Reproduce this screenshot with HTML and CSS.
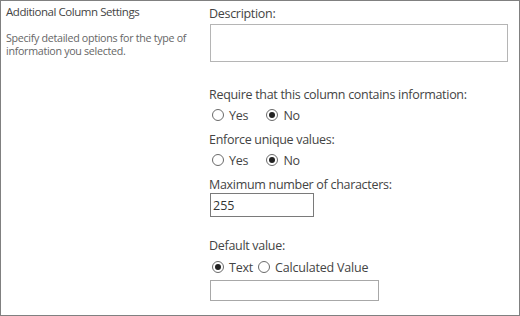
FILE: index.html
```html
<!DOCTYPE html>
<html>
<head>
<meta charset="utf-8">
<link rel="stylesheet" href="styles.css">
</head>
<body>
<div class="panel">
  <div class="side">
    <div class="side-title">Additional Column Settings</div>
    <div class="side-desc">Specify detailed options for the type of information you selected.</div>
  </div>
  <div class="main">
    <div class="label l-desc">Description:</div>
    <div class="textarea"></div>

    <div class="label l-req">Require that this column contains information:</div>
    <div class="radios r1">
      <span class="radio"></span><span class="rtext">Yes</span>
      <span class="radio checked gap"></span><span class="rtext">No</span>
    </div>

    <div class="label l-uni">Enforce unique values:</div>
    <div class="radios r1">
      <span class="radio"></span><span class="rtext">Yes</span>
      <span class="radio checked gap"></span><span class="rtext">No</span>
    </div>

    <div class="label l-max">Maximum number of characters:</div>
    <div class="input small">255</div>

    <div class="label l-def">Default value:</div>
    <div class="radios r3">
      <span class="radio checked"></span><span class="rtext">Text</span>
      <span class="radio gap-s"></span><span class="rtext">Calculated Value</span>
    </div>
    <div class="input wide"></div>
  </div>
</div>
</body>
</html>
```
FILE: styles.css
```css
html, body {
  margin: 0;
  padding: 0;
  background: #fff;
}
.panel {
  width: 520px;
  height: 316px;
  box-sizing: border-box;
  border: 1px solid #808080;
  display: flex;
  font-family: "Open Sans", "Noto Sans", sans-serif;
  color: #444;
}
.side {
  width: 207px;
  padding: 3px 0 0 5px;
  box-sizing: border-box;
}
.side-title {
  font-size: 11.5px;
  line-height: 15px;
  color: #444;
  letter-spacing: -0.45px;
  white-space: nowrap;
}
.side-desc {
  margin-top: 13px;
  font-size: 10.7px;
  line-height: 13px;
  color: #666;
  width: 200px;
  letter-spacing: -0.3px;
}
.main {
  display: flex;
  flex-direction: column;
  align-items: flex-start;
  padding-top: 5px;
}
.label {
  font-size: 12.5px;
  line-height: 16px;
  height: 16px;
  color: #444;
  letter-spacing: -0.3px;
  white-space: nowrap;
  margin-left: 1px;
}
.textarea {
  margin-top: 2px;
  width: 298px;
  height: 38px;
  box-sizing: border-box;
  border: 1px solid #b5b5b5;
  margin-left: 2px;
}
.l-req { margin-top: 25px; }
.l-uni { margin-top: 7px; }
.l-max { margin-top: 7px; }
.l-def { margin-top: 21px; }
.radios {
  display: flex;
  align-items: center;
  height: 20px;
  margin-top: 2px;
  margin-left: 4px;
  font-size: 12.5px;
  letter-spacing: -0.2px;
  color: #444;
}
.r3 { margin-top: 3px; }
.radio {
  width: 12px;
  height: 12px;
  box-sizing: border-box;
  border: 1px solid #6a6a6a;
  border-radius: 50%;
  display: inline-flex;
  align-items: center;
  justify-content: center;
  background: #fff;
}
.radio.checked::after {
  content: "";
  width: 6px;
  height: 6px;
  border-radius: 50%;
  background: #222;
}
.rtext { margin-left: 5px; }
.radio.gap { margin-left: 18px; }
.radio.gap-s { margin-left: 5px; }
.input {
  box-sizing: border-box;
  border: 1px solid #a8a8a8;
  margin-left: 2px;
  font-size: 12.5px;
  color: #333;
  padding-left: 2px;
  display: flex;
  align-items: center;
}
.small {
  width: 104px;
  height: 24px;
  border-color: #7a7a7a;
}
.wide {
  margin-top: 3px;
  width: 169px;
  height: 21px;
}
```
